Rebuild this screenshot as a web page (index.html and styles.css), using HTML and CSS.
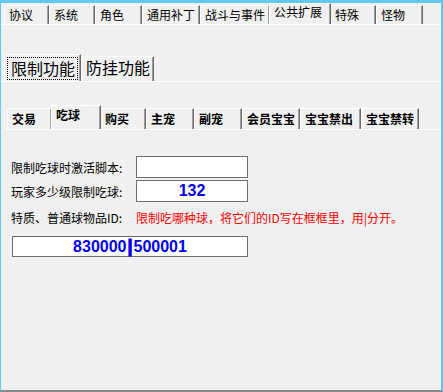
FILE: index.html
```html
<!DOCTYPE html>
<html lang="zh-CN">
<head>
    <meta charset="UTF-8">
    <title>公共扩展</title>
    <link rel="stylesheet" href="styles.css">
</head>
<body>
<div class="window">
    <!-- top tab strip -->
    <div class="tabs top-tabs">
        <div class="tab w45">协议</div>
        <div class="tab w46">系统</div>
        <div class="tab w47">角色</div>
        <div class="tab w58">通用补丁</div>
        <div class="tab w70">战斗与事件</div>
        <div class="tab active w62">公共扩展</div>
        <div class="tab w46">特殊</div>
        <div class="tab w47">怪物</div>
    </div>
    <div class="panel">
        <!-- second level tabs -->
        <div class="tabs big-tabs">
            <div class="tab active w77"><span class="focus">限制功能</span></div>
            <div class="tab w73">防挂功能</div>
        </div>
        <div class="panel inner">
            <!-- third level tabs -->
            <div class="tabs small-tabs">
                <div class="tab w45">交易</div>
                <div class="tab active w50">吃球</div>
                <div class="tab w46">购买</div>
                <div class="tab w48">主宠</div>
                <div class="tab w48">副宠</div>
                <div class="tab w58">会员宝宝</div>
                <div class="tab w61">宝宝禁出</div>
                <div class="tab w58">宝宝禁转</div>
            </div>
            <div class="content">
                <div class="row">
                    <label class="lbl">限制吃球时激活脚本:</label>
                    <div class="field"></div>
                </div>
                <div class="row">
                    <label class="lbl">玩家多少级限制吃球:</label>
                    <div class="field">132</div>
                </div>
                <div class="row note-row">
                    <label class="lbl">特质、普通球物品ID:</label>
                    <span class="note">限制吃哪种球，将它们的ID写在框框里，用|分开。</span>
                </div>
                <div class="field wide">830000<span class="bar">|</span>500001</div>
            </div>
        </div>
    </div>
</div>
</body>
</html>
```

FILE: styles.css
```css
/* General reset */
* {
    margin: 0;
    padding: 0;
    box-sizing: border-box;
}

body {
    font-family: "Noto Sans CJK SC", "Noto Sans", sans-serif;
    font-size: 12px;
    color: #000;
    background: #f0f0f0;
}

.window {
    width: 443px;
    height: 392px;
    background: #f0f0f0;
    border-top: 3px solid #62c8ee;
    border-left: 1px solid #62c8ee;
    border-right: 2px solid #62c8ee;
    border-bottom: 2px solid #8a8a8a;
    overflow: hidden;
}

/* Tabs */
.tabs {
    display: flex;
    align-items: flex-end;
}

.tab {
    background: #f0f0f0;
    border-top: 1px solid #fff;
    border-left: 1px solid #fff;
    border-right: 1px solid #696969;
    box-shadow: inset -1px 0 0 #a0a0a0;
    white-space: nowrap;
    line-height: 1;
}

.w45 { width: 45px; }
.w46 { width: 46px; }
.w47 { width: 47px; }
.w48 { width: 48px; }
.w50 { width: 50px; }
.w58 { width: 58px; }
.w61 { width: 61px; }
.w62 { width: 62px; }
.w70 { width: 70px; }
.w73 { width: 73px; }
.w77 { width: 77px; }

.top-tabs {
    padding-left: 3px;
    height: 21px;
}

.top-tabs .tab {
    height: 19px;
    padding: 3px 0 0 4px;
    font-size: 12px;
}

.top-tabs .tab.active {
    height: 21px;
    padding-top: 2px;
    margin: 0 -1px 0 -1px;
    position: relative;
    z-index: 1;
}

.panel {
    border-top: 1px solid #fff;
}

/* second level */
.big-tabs {
    margin-top: 29px;
    padding-left: 3px;
    height: 27px;
}

.big-tabs .tab {
    height: 25px;
    font-size: 16px;
    padding: 2px 0 0 4px;
}

.big-tabs .tab.active {
    height: 27px;
    padding: 2px 2px 0 2px;
    position: relative;
    z-index: 1;
}

.focus {
    display: inline-block;
    border: 1px dotted #000;
    padding: 1px 2px 1px 3px;
    line-height: 19px;
}

/* third level */
.small-tabs {
    margin-top: 23px;
    padding-left: 6px;
    height: 24px;
}

.small-tabs .tab {
    height: 21px;
    font-weight: bold;
    padding: 4px 0 0 4px;
}

.small-tabs .tab.active {
    height: 24px;
    padding-top: 3px;
    margin: 0 -1px;
    position: relative;
    z-index: 1;
}

/* form */
.content {
    margin-left: 4px;
    border-top: 1px solid #fff;
    padding: 26px 0 0 6px;
}

.row {
    display: flex;
    align-items: center;
    height: 22px;
    margin-bottom: 2px;
}

.lbl {
    width: 125px;
    font-size: 12px;
}

.field {
    width: 112px;
    height: 22px;
    background: #fff;
    border: 1px solid #6e6e6e;
    color: #0000ee;
    font-weight: bold;
    font-size: 16px;
    text-align: center;
    line-height: 20px;
    font-family: "Liberation Sans", Arial, sans-serif;
}

.note-row {
    margin-top: 4px;
    margin-bottom: 8px;
}

.note {
    color: #ff0000;
    font-size: 12px;
}

.field.wide {
    width: 236px;
    height: 21px;
    margin-left: 1px;
    line-height: 19px;
}

.bar {
    font-size: 18px;
    -webkit-text-stroke: 1px #0000ee;
    margin: 0 1px;
}
```
